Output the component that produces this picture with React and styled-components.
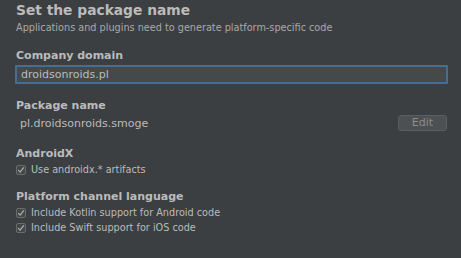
import React from "react";
import styled, { createGlobalStyle } from "styled-components";

const Global = createGlobalStyle`
  html, body { margin: 0; padding: 0; background: #3c3f41; }
  body { font-family: "DejaVu Sans", "Noto Sans", sans-serif; color: #bbbbbb; }
`;

const Page = styled.div`
  width: 461px;
  height: 258px;
  box-sizing: border-box;
  padding: 2px 14px 0 16px;
  display: flex;
  flex-direction: column;
  overflow: hidden;
`;

const Title = styled.h1`
  margin: 0;
  font-size: 13.8px;
  line-height: 17px;
  font-weight: bold;
  color: #bbbbbb;
`;

const Subtitle = styled.div`
  margin-top: 3px;
  font-size: 9.7px;
  line-height: 12px;
  color: #a9a9a9;
`;

const Section = styled.section`
  margin-top: ${(p) => p.$gap}px;
  display: flex;
  flex-direction: column;
`;

const Label = styled.div`
  font-size: 11px;
  line-height: 13px;
  font-weight: bold;
  color: #bbbbbb;
`;

const Input = styled.input`
  margin: 3px 0 0 -1px;
  box-sizing: border-box;
  width: 433px;
  height: 19px;
  padding: 0 4px;
  background: #45494a;
  border: 2px solid #466d94;
  border-radius: 1px;
  outline: none;
  color: #bbbbbb;
  font-family: inherit;
  font-size: 11px;
`;

const Row = styled.div`
  display: flex;
  align-items: center;
  justify-content: space-between;
  margin-top: ${(p) => p.$gap || 0}px;
`;

const Value = styled.div`
  padding-left: 4px;
  font-size: 11px;
  color: #bbbbbb;
`;

const Button = styled.button`
  width: 49px;
  height: 16px;
  box-sizing: border-box;
  padding: 0;
  background: #4c5052;
  border: 1px solid #5b5e5f;
  border-radius: 3px;
  color: #8c8c8c;
  font-family: inherit;
  font-size: 11px;
  line-height: 14px;
`;

const Check = styled.label`
  display: flex;
  align-items: center;
  gap: 5px;
  margin-top: ${(p) => p.$gap || 0}px;
  font-size: 9.7px;
  line-height: 13px;
  color: #bbbbbb;
`;

const Box = styled.span`
  width: 10px;
  height: 10px;
  box-sizing: border-box;
  border: 1px solid #6b6b6b;
  border-radius: 2px;
  background: #43494a;
  display: inline-flex;
  align-items: center;
  justify-content: center;
  flex: none;
`;

const Tick = () => (
  <svg width="8" height="8" viewBox="0 0 8 8">
    <path d="M1.2 4.2 L3.1 6.2 L6.8 1.4" stroke="#b0b0b0" strokeWidth="1.2" fill="none" />
  </svg>
);

const CheckItem = ({ children, gap }) => (
  <Check $gap={gap}>
    <Box><Tick /></Box>
    {children}
  </Check>
);

export default function App() {
  return (
    <>
      <Global />
      <Page>
        <Title>Set the package name</Title>
        <Subtitle>Applications and plugins need to generate platform-specific code</Subtitle>
        <Section $gap={15}>
          <Label>Company domain</Label>
          <Input defaultValue="droidsonroids.pl" />
        </Section>
        <Section $gap={15}>
          <Label>Package name</Label>
          <Row $gap={3}>
            <Value>pl.droidsonroids.smoge</Value>
            <Button>Edit</Button>
          </Row>
        </Section>
        <Section $gap={16}>
          <Label>AndroidX</Label>
          <CheckItem gap={3}>Use androidx.* artifacts</CheckItem>
        </Section>
        <Section $gap={14}>
          <Label>Platform channel language</Label>
          <CheckItem gap={3}>Include Kotlin support for Android code</CheckItem>
          <CheckItem gap={2}>Include Swift support for iOS code</CheckItem>
        </Section>
      </Page>
    </>
  );
}
